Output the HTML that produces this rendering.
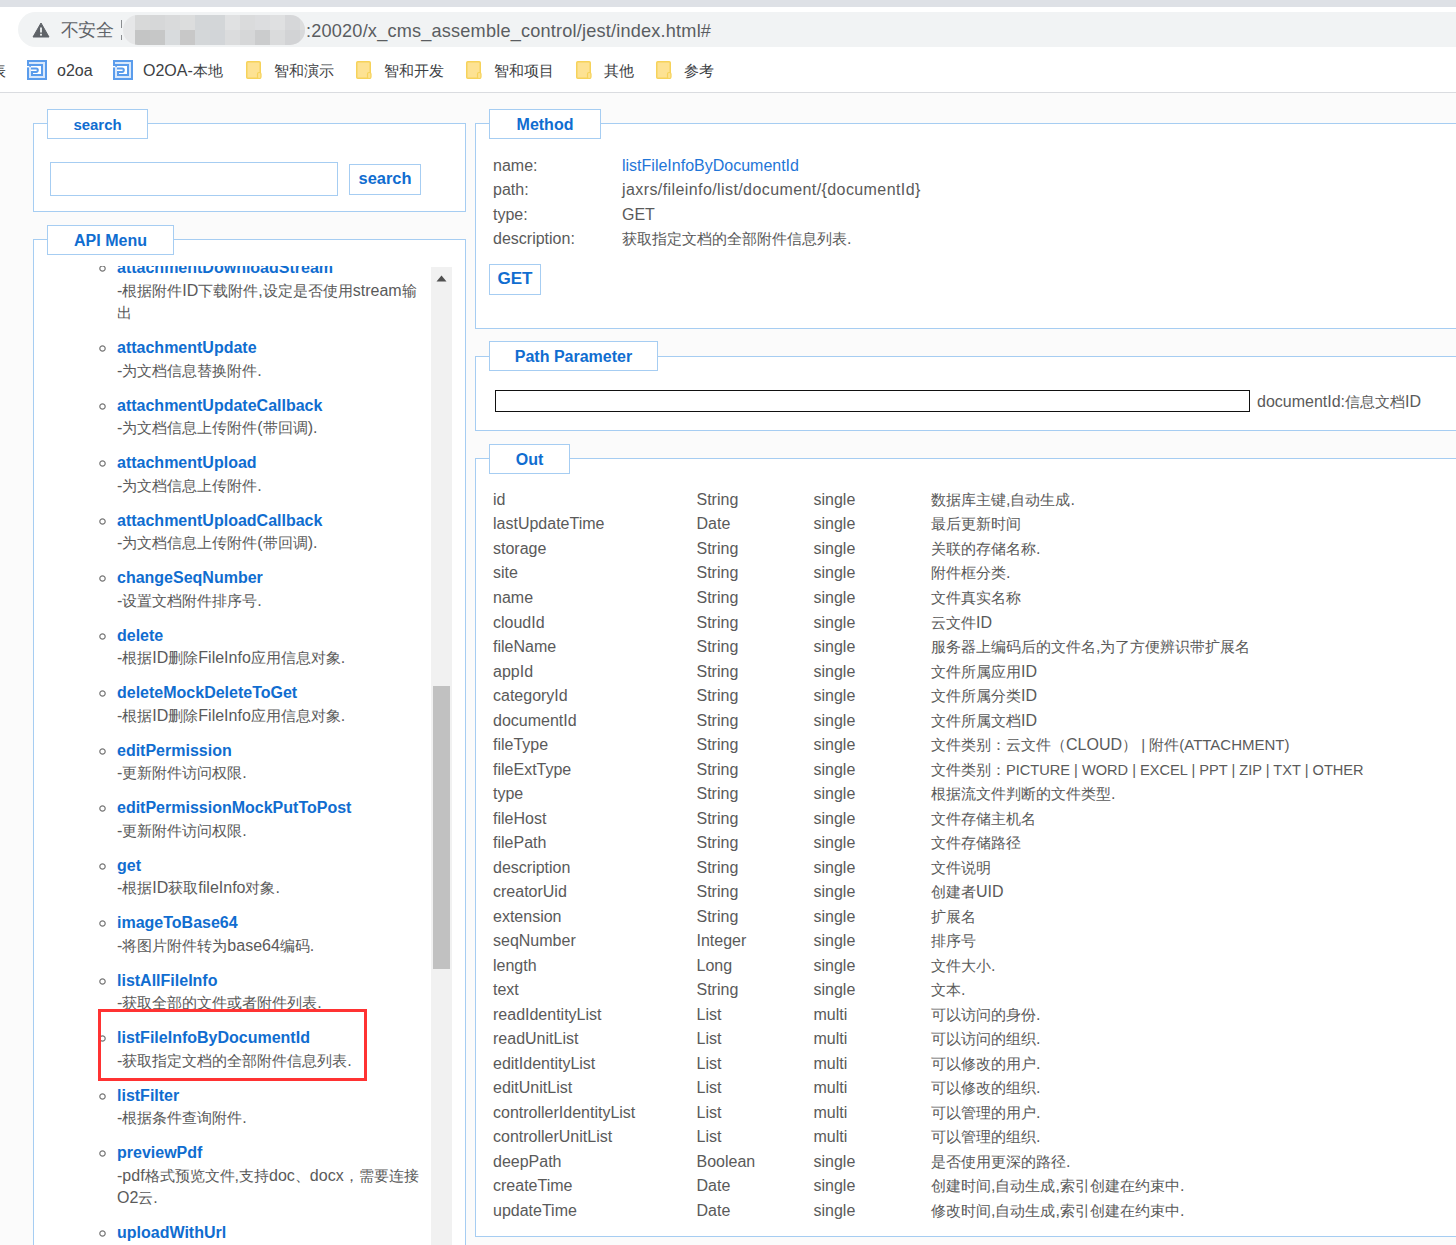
<!DOCTYPE html>
<html><head><meta charset="utf-8"><title>jest</title><style>
html,body{margin:0;padding:0;}
body{width:1456px;height:1245px;overflow:hidden;position:relative;background:#fbfbfb;font-family:"Liberation Sans",sans-serif;font-size:16px;color:#5a5a5a;}
.a{position:absolute;}
.t{position:absolute;white-space:nowrap;line-height:20px;height:20px;}
.fs{position:absolute;background:#fff;border:1px solid #a6cdf2;box-sizing:border-box;}
.lg{position:absolute;background:#fff;border:1px solid #a6cdf2;box-sizing:border-box;color:#106dd0;font-weight:700;text-align:center;white-space:nowrap;}
.b{font-weight:700;color:#106dd0;}
.c{display:inline-block;width:15px;text-align:center;font-style:normal;font-size:15px;}
</style></head>
<body>
<div class="a" style="left:0;top:0;width:1456px;height:93px;background:#fff;"></div>
<div class="a" style="left:0;top:0;width:1456px;height:7px;background:#dee1e6;"></div>
<div class="a" style="left:18px;top:12px;width:1500px;height:35px;border-radius:17.5px;background:#f1f3f4;"></div>
<svg class="a" style="left:32px;top:22px" width="18" height="16" viewBox="0 0 18 16"><path d="M9 1 L17 15 L1 15 Z" fill="#5f6368" stroke="#5f6368" stroke-width="1" stroke-linejoin="round"/><rect x="8.1" y="5.5" width="1.8" height="5" fill="#f1f3f4"/><rect x="8.1" y="11.8" width="1.8" height="1.8" fill="#f1f3f4"/></svg>
<div class="t" style="left:61px;top:18.00px;line-height:24px;height:24px;font-size:19.2px;color:#5f6368;"><i class="c" style="width:17.4px;font-size:18px">不</i><i class="c" style="width:17.4px;font-size:18px">安</i><i class="c" style="width:17.4px;font-size:18px">全</i></div>
<div class="a" style="left:121px;top:20px;width:1.2px;height:8px;background:#8a8d90;"></div>
<div class="a" style="left:121px;top:35px;width:1.2px;height:5px;background:#8a8d90;"></div>
<div class="a" style="left:123px;top:15px;width:182px;height:30px;border-radius:15px;background:#e6e7e8;overflow:hidden;">
<div class="a" style="left:12px;top:0;width:15px;height:15px;background:#d8d9d9;"></div>
<div class="a" style="left:12px;top:15px;width:15px;height:15px;background:#c4c5c5;"></div>
<div class="a" style="left:27px;top:0;width:15px;height:15px;background:#d6d7d8;"></div>
<div class="a" style="left:27px;top:15px;width:15px;height:15px;background:#c6c7c7;"></div>
<div class="a" style="left:42px;top:0;width:15px;height:15px;background:#d9dadb;"></div>
<div class="a" style="left:42px;top:15px;width:15px;height:15px;background:#d8dbdd;"></div>
<div class="a" style="left:57px;top:0;width:15px;height:15px;background:#dcdddd;"></div>
<div class="a" style="left:57px;top:15px;width:15px;height:15px;background:#c8c8c8;"></div>
<div class="a" style="left:72px;top:0;width:15px;height:15px;background:#d3d6d8;"></div>
<div class="a" style="left:72px;top:15px;width:15px;height:15px;background:#d4d7d9;"></div>
<div class="a" style="left:87px;top:0;width:15px;height:15px;background:#d3d6d8;"></div>
<div class="a" style="left:87px;top:15px;width:15px;height:15px;background:#d2d5d8;"></div>
<div class="a" style="left:102px;top:0;width:15px;height:15px;background:#e0e1e2;"></div>
<div class="a" style="left:102px;top:15px;width:15px;height:15px;background:#dbdcdd;"></div>
<div class="a" style="left:117px;top:0;width:15px;height:15px;background:#dadbdc;"></div>
<div class="a" style="left:117px;top:15px;width:15px;height:15px;background:#d6d7d8;"></div>
<div class="a" style="left:132px;top:0;width:15px;height:15px;background:#dcdddf;"></div>
<div class="a" style="left:132px;top:15px;width:15px;height:15px;background:#cbcccd;"></div>
<div class="a" style="left:147px;top:0;width:15px;height:15px;background:#dfe0e1;"></div>
<div class="a" style="left:147px;top:15px;width:15px;height:15px;background:#dadbdc;"></div>
<div class="a" style="left:162px;top:0;width:15px;height:15px;background:#d6d7d9;"></div>
<div class="a" style="left:162px;top:15px;width:15px;height:15px;background:#d2d3d5;"></div>
<div class="a" style="left:177px;top:0;width:15px;height:15px;background:#dcdddd;"></div>
<div class="a" style="left:177px;top:15px;width:15px;height:15px;background:#d8d9da;"></div>
</div>
<div class="t" style="left:306px;top:19.00px;line-height:24px;height:24px;font-size:18.14px;letter-spacing:0.2px;color:#5a5d61;">:20020/x_cms_assemble_control/jest/index.html#</div>
<div class="t" style="left:-9px;top:61.00px;line-height:20px;height:20px;color:#333;"><i class="c" style="width:14.85px;font-size:15px">表</i></div>
<svg class="a" style="left:27px;top:60px" width="20" height="20" viewBox="0 0 20 20"><rect x="0" y="0" width="20" height="20" fill="#5a9cec"/><path d="M3 6.8 V17 H17 V3 H2" fill="none" stroke="#d9e8fb" stroke-width="2"/><rect x="0" y="6" width="2.2" height="1.4" fill="#fff"/><rect x="4" y="6" width="10" height="8" fill="#fff"/><path d="M4 8.5 H9.3 Q10.8 8.5 10.8 10.1 Q10.8 11.9 9.3 11.9 H5 V15" fill="none" stroke="#5a9cec" stroke-width="2"/></svg>
<div class="t" style="left:57px;top:61.00px;line-height:20px;height:20px;color:#3c4043;">o2oa</div>
<svg class="a" style="left:113px;top:60px" width="20" height="20" viewBox="0 0 20 20"><rect x="0" y="0" width="20" height="20" fill="#5a9cec"/><path d="M3 6.8 V17 H17 V3 H2" fill="none" stroke="#d9e8fb" stroke-width="2"/><rect x="0" y="6" width="2.2" height="1.4" fill="#fff"/><rect x="4" y="6" width="10" height="8" fill="#fff"/><path d="M4 8.5 H9.3 Q10.8 8.5 10.8 10.1 Q10.8 11.9 9.3 11.9 H5 V15" fill="none" stroke="#5a9cec" stroke-width="2"/></svg>
<div class="t" style="left:143px;top:61.00px;line-height:20px;height:20px;color:#3c4043;">O2OA-<i class="c" style="width:14.85px;font-size:15px">本</i><i class="c" style="width:14.85px;font-size:15px">地</i></div>
<svg class="a" style="left:246px;top:61px" width="17" height="19" viewBox="0 0 17 19"><rect x="0.75" y="0.75" width="13.5" height="16.5" rx="1" fill="#fde293" stroke="#f6d25a" stroke-width="1.5"/><rect x="11.5" y="11.5" width="3.5" height="6" rx="1.5" fill="#fde293" stroke="#f6d25a" stroke-width="1.2"/></svg>
<div class="t" style="left:274px;top:61.00px;line-height:20px;height:20px;color:#3c4043;"><i class="c" style="width:14.85px;font-size:15px">智</i><i class="c" style="width:14.85px;font-size:15px">和</i><i class="c" style="width:14.85px;font-size:15px">演</i><i class="c" style="width:14.85px;font-size:15px">示</i></div>
<svg class="a" style="left:356px;top:61px" width="17" height="19" viewBox="0 0 17 19"><rect x="0.75" y="0.75" width="13.5" height="16.5" rx="1" fill="#fde293" stroke="#f6d25a" stroke-width="1.5"/><rect x="11.5" y="11.5" width="3.5" height="6" rx="1.5" fill="#fde293" stroke="#f6d25a" stroke-width="1.2"/></svg>
<div class="t" style="left:384px;top:61.00px;line-height:20px;height:20px;color:#3c4043;"><i class="c" style="width:14.85px;font-size:15px">智</i><i class="c" style="width:14.85px;font-size:15px">和</i><i class="c" style="width:14.85px;font-size:15px">开</i><i class="c" style="width:14.85px;font-size:15px">发</i></div>
<svg class="a" style="left:466px;top:61px" width="17" height="19" viewBox="0 0 17 19"><rect x="0.75" y="0.75" width="13.5" height="16.5" rx="1" fill="#fde293" stroke="#f6d25a" stroke-width="1.5"/><rect x="11.5" y="11.5" width="3.5" height="6" rx="1.5" fill="#fde293" stroke="#f6d25a" stroke-width="1.2"/></svg>
<div class="t" style="left:494px;top:61.00px;line-height:20px;height:20px;color:#3c4043;"><i class="c" style="width:14.85px;font-size:15px">智</i><i class="c" style="width:14.85px;font-size:15px">和</i><i class="c" style="width:14.85px;font-size:15px">项</i><i class="c" style="width:14.85px;font-size:15px">目</i></div>
<svg class="a" style="left:576px;top:61px" width="17" height="19" viewBox="0 0 17 19"><rect x="0.75" y="0.75" width="13.5" height="16.5" rx="1" fill="#fde293" stroke="#f6d25a" stroke-width="1.5"/><rect x="11.5" y="11.5" width="3.5" height="6" rx="1.5" fill="#fde293" stroke="#f6d25a" stroke-width="1.2"/></svg>
<div class="t" style="left:604px;top:61.00px;line-height:20px;height:20px;color:#3c4043;"><i class="c" style="width:14.85px;font-size:15px">其</i><i class="c" style="width:14.85px;font-size:15px">他</i></div>
<svg class="a" style="left:656px;top:61px" width="17" height="19" viewBox="0 0 17 19"><rect x="0.75" y="0.75" width="13.5" height="16.5" rx="1" fill="#fde293" stroke="#f6d25a" stroke-width="1.5"/><rect x="11.5" y="11.5" width="3.5" height="6" rx="1.5" fill="#fde293" stroke="#f6d25a" stroke-width="1.2"/></svg>
<div class="t" style="left:684px;top:61.00px;line-height:20px;height:20px;color:#3c4043;"><i class="c" style="width:14.85px;font-size:15px">参</i><i class="c" style="width:14.85px;font-size:15px">考</i></div>
<div class="a" style="left:0;top:92px;width:1456px;height:1px;background:#dadce0;"></div>
<div class="fs" style="left:33px;top:123px;width:433px;height:89px;"></div>
<div class="lg" style="left:47px;top:109px;width:101px;height:30px;"></div>
<div class="t" style="left:47px;top:115.00px;line-height:20px;height:20px;width:101px;text-align:center;font-weight:700;color:#106dd0;font-size:14.94px;">search</div>
<div class="a" style="left:50px;top:162px;width:288px;height:34px;border:1px solid #a6cdf2;box-sizing:border-box;background:#fff;"></div>
<div class="a" style="left:349px;top:164px;width:72px;height:31px;border:1px solid #a6cdf2;box-sizing:border-box;background:#fff;"></div>
<div class="t" style="left:349px;top:168.00px;line-height:20px;height:20px;width:72px;text-align:center;font-weight:700;color:#106dd0;font-size:16.43px;">search</div>
<div class="fs" style="left:33px;top:239px;width:433px;height:1100px;"></div>
<div class="lg" style="left:47px;top:225px;width:127px;height:30px;"></div>
<div class="t" style="left:47px;top:231.00px;line-height:20px;height:20px;width:127px;text-align:center;font-weight:700;color:#106dd0;">API Menu</div>
<div class="a" style="left:34px;top:266px;width:431px;height:1000px;overflow:hidden;">
<svg class="a" style="left:64px;top:-1.70px" width="9" height="9" viewBox="0 0 9 9"><circle cx="4.5" cy="4.5" r="2.7" fill="none" stroke="#777" stroke-width="1.2"/></svg>
<div class="t" style="left:83px;top:-8.00px;line-height:20px;height:20px;font-weight:700;color:#106dd0;">attachmentDownloadStream</div>
<div class="t" style="left:83px;top:15.00px;line-height:20px;height:20px;color:#5a5a5a;">-<i class="c">根</i><i class="c">据</i><i class="c">附</i><i class="c">件</i>ID<i class="c">下</i><i class="c">载</i><i class="c">附</i><i class="c">件</i>,<i class="c">设</i><i class="c">定</i><i class="c">是</i><i class="c">否</i><i class="c">使</i><i class="c">用</i>stream<i class="c">输</i></div>
<div class="t" style="left:83px;top:37.00px;line-height:20px;height:20px;color:#5a5a5a;"><i class="c">出</i></div>
<svg class="a" style="left:64px;top:78.20px" width="9" height="9" viewBox="0 0 9 9"><circle cx="4.5" cy="4.5" r="2.7" fill="none" stroke="#777" stroke-width="1.2"/></svg>
<div class="t" style="left:83px;top:72.00px;line-height:20px;height:20px;font-weight:700;color:#106dd0;">attachmentUpdate</div>
<div class="t" style="left:83px;top:95.00px;line-height:20px;height:20px;color:#5a5a5a;">-<i class="c">为</i><i class="c">文</i><i class="c">档</i><i class="c">信</i><i class="c">息</i><i class="c">替</i><i class="c">换</i><i class="c">附</i><i class="c">件</i>.</div>
<svg class="a" style="left:64px;top:135.70px" width="9" height="9" viewBox="0 0 9 9"><circle cx="4.5" cy="4.5" r="2.7" fill="none" stroke="#777" stroke-width="1.2"/></svg>
<div class="t" style="left:83px;top:130.00px;line-height:20px;height:20px;font-weight:700;color:#106dd0;">attachmentUpdateCallback</div>
<div class="t" style="left:83px;top:152.00px;line-height:20px;height:20px;color:#5a5a5a;">-<i class="c">为</i><i class="c">文</i><i class="c">档</i><i class="c">信</i><i class="c">息</i><i class="c">上</i><i class="c">传</i><i class="c">附</i><i class="c">件</i>(<i class="c">带</i><i class="c">回</i><i class="c">调</i>).</div>
<svg class="a" style="left:64px;top:193.20px" width="9" height="9" viewBox="0 0 9 9"><circle cx="4.5" cy="4.5" r="2.7" fill="none" stroke="#777" stroke-width="1.2"/></svg>
<div class="t" style="left:83px;top:187.00px;line-height:20px;height:20px;font-weight:700;color:#106dd0;">attachmentUpload</div>
<div class="t" style="left:83px;top:210.00px;line-height:20px;height:20px;color:#5a5a5a;">-<i class="c">为</i><i class="c">文</i><i class="c">档</i><i class="c">信</i><i class="c">息</i><i class="c">上</i><i class="c">传</i><i class="c">附</i><i class="c">件</i>.</div>
<svg class="a" style="left:64px;top:250.70px" width="9" height="9" viewBox="0 0 9 9"><circle cx="4.5" cy="4.5" r="2.7" fill="none" stroke="#777" stroke-width="1.2"/></svg>
<div class="t" style="left:83px;top:245.00px;line-height:20px;height:20px;font-weight:700;color:#106dd0;">attachmentUploadCallback</div>
<div class="t" style="left:83px;top:267.00px;line-height:20px;height:20px;color:#5a5a5a;">-<i class="c">为</i><i class="c">文</i><i class="c">档</i><i class="c">信</i><i class="c">息</i><i class="c">上</i><i class="c">传</i><i class="c">附</i><i class="c">件</i>(<i class="c">带</i><i class="c">回</i><i class="c">调</i>).</div>
<svg class="a" style="left:64px;top:308.20px" width="9" height="9" viewBox="0 0 9 9"><circle cx="4.5" cy="4.5" r="2.7" fill="none" stroke="#777" stroke-width="1.2"/></svg>
<div class="t" style="left:83px;top:302.00px;line-height:20px;height:20px;font-weight:700;color:#106dd0;">changeSeqNumber</div>
<div class="t" style="left:83px;top:325.00px;line-height:20px;height:20px;color:#5a5a5a;">-<i class="c">设</i><i class="c">置</i><i class="c">文</i><i class="c">档</i><i class="c">附</i><i class="c">件</i><i class="c">排</i><i class="c">序</i><i class="c">号</i>.</div>
<svg class="a" style="left:64px;top:365.70px" width="9" height="9" viewBox="0 0 9 9"><circle cx="4.5" cy="4.5" r="2.7" fill="none" stroke="#777" stroke-width="1.2"/></svg>
<div class="t" style="left:83px;top:360.00px;line-height:20px;height:20px;font-weight:700;color:#106dd0;">delete</div>
<div class="t" style="left:83px;top:382.00px;line-height:20px;height:20px;color:#5a5a5a;">-<i class="c">根</i><i class="c">据</i>ID<i class="c">删</i><i class="c">除</i>FileInfo<i class="c">应</i><i class="c">用</i><i class="c">信</i><i class="c">息</i><i class="c">对</i><i class="c">象</i>.</div>
<svg class="a" style="left:64px;top:423.20px" width="9" height="9" viewBox="0 0 9 9"><circle cx="4.5" cy="4.5" r="2.7" fill="none" stroke="#777" stroke-width="1.2"/></svg>
<div class="t" style="left:83px;top:417.00px;line-height:20px;height:20px;font-weight:700;color:#106dd0;">deleteMockDeleteToGet</div>
<div class="t" style="left:83px;top:440.00px;line-height:20px;height:20px;color:#5a5a5a;">-<i class="c">根</i><i class="c">据</i>ID<i class="c">删</i><i class="c">除</i>FileInfo<i class="c">应</i><i class="c">用</i><i class="c">信</i><i class="c">息</i><i class="c">对</i><i class="c">象</i>.</div>
<svg class="a" style="left:64px;top:480.70px" width="9" height="9" viewBox="0 0 9 9"><circle cx="4.5" cy="4.5" r="2.7" fill="none" stroke="#777" stroke-width="1.2"/></svg>
<div class="t" style="left:83px;top:475.00px;line-height:20px;height:20px;font-weight:700;color:#106dd0;">editPermission</div>
<div class="t" style="left:83px;top:497.00px;line-height:20px;height:20px;color:#5a5a5a;">-<i class="c">更</i><i class="c">新</i><i class="c">附</i><i class="c">件</i><i class="c">访</i><i class="c">问</i><i class="c">权</i><i class="c">限</i>.</div>
<svg class="a" style="left:64px;top:538.20px" width="9" height="9" viewBox="0 0 9 9"><circle cx="4.5" cy="4.5" r="2.7" fill="none" stroke="#777" stroke-width="1.2"/></svg>
<div class="t" style="left:83px;top:532.00px;line-height:20px;height:20px;font-weight:700;color:#106dd0;">editPermissionMockPutToPost</div>
<div class="t" style="left:83px;top:555.00px;line-height:20px;height:20px;color:#5a5a5a;">-<i class="c">更</i><i class="c">新</i><i class="c">附</i><i class="c">件</i><i class="c">访</i><i class="c">问</i><i class="c">权</i><i class="c">限</i>.</div>
<svg class="a" style="left:64px;top:595.70px" width="9" height="9" viewBox="0 0 9 9"><circle cx="4.5" cy="4.5" r="2.7" fill="none" stroke="#777" stroke-width="1.2"/></svg>
<div class="t" style="left:83px;top:590.00px;line-height:20px;height:20px;font-weight:700;color:#106dd0;">get</div>
<div class="t" style="left:83px;top:612.00px;line-height:20px;height:20px;color:#5a5a5a;">-<i class="c">根</i><i class="c">据</i>ID<i class="c">获</i><i class="c">取</i>fileInfo<i class="c">对</i><i class="c">象</i>.</div>
<svg class="a" style="left:64px;top:653.20px" width="9" height="9" viewBox="0 0 9 9"><circle cx="4.5" cy="4.5" r="2.7" fill="none" stroke="#777" stroke-width="1.2"/></svg>
<div class="t" style="left:83px;top:647.00px;line-height:20px;height:20px;font-weight:700;color:#106dd0;">imageToBase64</div>
<div class="t" style="left:83px;top:670.00px;line-height:20px;height:20px;color:#5a5a5a;">-<i class="c">将</i><i class="c">图</i><i class="c">片</i><i class="c">附</i><i class="c">件</i><i class="c">转</i><i class="c">为</i>base64<i class="c">编</i><i class="c">码</i>.</div>
<svg class="a" style="left:64px;top:710.70px" width="9" height="9" viewBox="0 0 9 9"><circle cx="4.5" cy="4.5" r="2.7" fill="none" stroke="#777" stroke-width="1.2"/></svg>
<div class="t" style="left:83px;top:705.00px;line-height:20px;height:20px;font-weight:700;color:#106dd0;">listAllFileInfo</div>
<div class="t" style="left:83px;top:727.00px;line-height:20px;height:20px;color:#5a5a5a;">-<i class="c">获</i><i class="c">取</i><i class="c">全</i><i class="c">部</i><i class="c">的</i><i class="c">文</i><i class="c">件</i><i class="c">或</i><i class="c">者</i><i class="c">附</i><i class="c">件</i><i class="c">列</i><i class="c">表</i>.</div>
<svg class="a" style="left:64px;top:768.20px" width="9" height="9" viewBox="0 0 9 9"><circle cx="4.5" cy="4.5" r="2.7" fill="none" stroke="#777" stroke-width="1.2"/></svg>
<div class="t" style="left:83px;top:762.00px;line-height:20px;height:20px;font-weight:700;color:#106dd0;">listFileInfoByDocumentId</div>
<div class="t" style="left:83px;top:785.00px;line-height:20px;height:20px;color:#5a5a5a;">-<i class="c">获</i><i class="c">取</i><i class="c">指</i><i class="c">定</i><i class="c">文</i><i class="c">档</i><i class="c">的</i><i class="c">全</i><i class="c">部</i><i class="c">附</i><i class="c">件</i><i class="c">信</i><i class="c">息</i><i class="c">列</i><i class="c">表</i>.</div>
<svg class="a" style="left:64px;top:825.70px" width="9" height="9" viewBox="0 0 9 9"><circle cx="4.5" cy="4.5" r="2.7" fill="none" stroke="#777" stroke-width="1.2"/></svg>
<div class="t" style="left:83px;top:820.00px;line-height:20px;height:20px;font-weight:700;color:#106dd0;">listFilter</div>
<div class="t" style="left:83px;top:842.00px;line-height:20px;height:20px;color:#5a5a5a;">-<i class="c">根</i><i class="c">据</i><i class="c">条</i><i class="c">件</i><i class="c">查</i><i class="c">询</i><i class="c">附</i><i class="c">件</i>.</div>
<svg class="a" style="left:64px;top:883.20px" width="9" height="9" viewBox="0 0 9 9"><circle cx="4.5" cy="4.5" r="2.7" fill="none" stroke="#777" stroke-width="1.2"/></svg>
<div class="t" style="left:83px;top:877.00px;line-height:20px;height:20px;font-weight:700;color:#106dd0;">previewPdf</div>
<div class="t" style="left:83px;top:900.00px;line-height:20px;height:20px;color:#5a5a5a;">-pdf<i class="c">格</i><i class="c">式</i><i class="c">预</i><i class="c">览</i><i class="c">文</i><i class="c">件</i>,<i class="c">支</i><i class="c">持</i>doc<i class="c">、</i>docx<i class="c">，</i><i class="c">需</i><i class="c">要</i><i class="c">连</i><i class="c">接</i></div>
<div class="t" style="left:83px;top:922.00px;line-height:20px;height:20px;color:#5a5a5a;">O2<i class="c">云</i>.</div>
<svg class="a" style="left:64px;top:963.10px" width="9" height="9" viewBox="0 0 9 9"><circle cx="4.5" cy="4.5" r="2.7" fill="none" stroke="#777" stroke-width="1.2"/></svg>
<div class="t" style="left:83px;top:957.00px;line-height:20px;height:20px;font-weight:700;color:#106dd0;">uploadWithUrl</div>
<div class="t" style="left:83px;top:980.00px;line-height:20px;height:20px;color:#5a5a5a;">-<i class="c">通</i><i class="c">过</i>URL<i class="c">上</i><i class="c">传</i><i class="c">附</i><i class="c">件</i>.</div>
</div>
<div class="a" style="left:431px;top:267px;width:21px;height:1000px;background:#f1f1f1;"></div>
<svg class="a" style="left:436px;top:275px" width="11" height="7" viewBox="0 0 11 7"><path d="M5.5 0.5 L10.5 6.5 L0.5 6.5 Z" fill="#505050"/></svg>
<div class="a" style="left:433px;top:686px;width:17px;height:283px;background:#c1c1c1;"></div>
<div class="a" style="left:98px;top:1009px;width:269px;height:72px;border:3px solid #ff3232;box-sizing:border-box;"></div>
<div class="fs" style="left:475px;top:123px;width:1100px;height:206px;"></div>
<div class="lg" style="left:489px;top:109px;width:112px;height:30px;"></div>
<div class="t" style="left:489px;top:115.00px;line-height:20px;height:20px;width:112px;text-align:center;font-weight:700;color:#106dd0;">Method</div>
<div class="t" style="left:493px;top:156.00px;line-height:20px;height:20px;">name:</div>
<div class="t" style="left:622px;top:156.00px;line-height:20px;height:20px;"><span style="color:#1f76d8">listFileInfoByDocumentId</span></div>
<div class="t" style="left:493px;top:180.00px;line-height:20px;height:20px;">path:</div>
<div class="t" style="left:622px;top:180.00px;line-height:20px;height:20px;"><span style="letter-spacing:0.41px">jaxrs/fileinfo/list/document/{documentId}</span></div>
<div class="t" style="left:493px;top:205.00px;line-height:20px;height:20px;">type:</div>
<div class="t" style="left:622px;top:205.00px;line-height:20px;height:20px;">GET</div>
<div class="t" style="left:493px;top:229.00px;line-height:20px;height:20px;">description:</div>
<div class="t" style="left:622px;top:229.00px;line-height:20px;height:20px;"><i class="c">获</i><i class="c">取</i><i class="c">指</i><i class="c">定</i><i class="c">文</i><i class="c">档</i><i class="c">的</i><i class="c">全</i><i class="c">部</i><i class="c">附</i><i class="c">件</i><i class="c">信</i><i class="c">息</i><i class="c">列</i><i class="c">表</i>.</div>
<div class="a" style="left:489px;top:264px;width:52px;height:31px;border:1px solid #a6cdf2;box-sizing:border-box;background:#fff;"></div>
<div class="t" style="left:489px;top:269.00px;line-height:20px;height:20px;width:52px;text-align:center;font-weight:700;color:#106dd0;font-size:17.07px;">GET</div>
<div class="fs" style="left:475px;top:356px;width:1100px;height:75px;"></div>
<div class="lg" style="left:489px;top:341px;width:169px;height:30px;"></div>
<div class="t" style="left:489px;top:347.00px;line-height:20px;height:20px;width:169px;text-align:center;font-weight:700;color:#106dd0;">Path Parameter</div>
<div class="a" style="left:495px;top:390px;width:755px;height:22px;border:1.5px solid #111;box-sizing:border-box;background:#fff;"></div>
<div class="t" style="left:1257px;top:392.00px;line-height:20px;height:20px;">documentId:<i class="c">信</i><i class="c">息</i><i class="c">文</i><i class="c">档</i>ID</div>
<div class="fs" style="left:475px;top:458px;width:1100px;height:779px;"></div>
<div class="lg" style="left:489px;top:444px;width:81px;height:30px;"></div>
<div class="t" style="left:489px;top:450.00px;line-height:20px;height:20px;width:81px;text-align:center;font-weight:700;color:#106dd0;">Out</div>
<div class="t" style="left:493px;top:490.00px;line-height:20px;height:20px;">id</div>
<div class="t" style="left:696.5px;top:490.00px;line-height:20px;height:20px;">String</div>
<div class="t" style="left:813.5px;top:490.00px;line-height:20px;height:20px;">single</div>
<div class="t" style="left:931px;top:490.00px;line-height:20px;height:20px;"><i class="c">数</i><i class="c">据</i><i class="c">库</i><i class="c">主</i><i class="c">键</i>,<i class="c">自</i><i class="c">动</i><i class="c">生</i><i class="c">成</i>.</div>
<div class="t" style="left:493px;top:514.00px;line-height:20px;height:20px;">lastUpdateTime</div>
<div class="t" style="left:696.5px;top:514.00px;line-height:20px;height:20px;">Date</div>
<div class="t" style="left:813.5px;top:514.00px;line-height:20px;height:20px;">single</div>
<div class="t" style="left:931px;top:514.00px;line-height:20px;height:20px;"><i class="c">最</i><i class="c">后</i><i class="c">更</i><i class="c">新</i><i class="c">时</i><i class="c">间</i></div>
<div class="t" style="left:493px;top:539.00px;line-height:20px;height:20px;">storage</div>
<div class="t" style="left:696.5px;top:539.00px;line-height:20px;height:20px;">String</div>
<div class="t" style="left:813.5px;top:539.00px;line-height:20px;height:20px;">single</div>
<div class="t" style="left:931px;top:539.00px;line-height:20px;height:20px;"><i class="c">关</i><i class="c">联</i><i class="c">的</i><i class="c">存</i><i class="c">储</i><i class="c">名</i><i class="c">称</i>.</div>
<div class="t" style="left:493px;top:563.00px;line-height:20px;height:20px;">site</div>
<div class="t" style="left:696.5px;top:563.00px;line-height:20px;height:20px;">String</div>
<div class="t" style="left:813.5px;top:563.00px;line-height:20px;height:20px;">single</div>
<div class="t" style="left:931px;top:563.00px;line-height:20px;height:20px;"><i class="c">附</i><i class="c">件</i><i class="c">框</i><i class="c">分</i><i class="c">类</i>.</div>
<div class="t" style="left:493px;top:588.00px;line-height:20px;height:20px;">name</div>
<div class="t" style="left:696.5px;top:588.00px;line-height:20px;height:20px;">String</div>
<div class="t" style="left:813.5px;top:588.00px;line-height:20px;height:20px;">single</div>
<div class="t" style="left:931px;top:588.00px;line-height:20px;height:20px;"><i class="c">文</i><i class="c">件</i><i class="c">真</i><i class="c">实</i><i class="c">名</i><i class="c">称</i></div>
<div class="t" style="left:493px;top:613.00px;line-height:20px;height:20px;">cloudId</div>
<div class="t" style="left:696.5px;top:613.00px;line-height:20px;height:20px;">String</div>
<div class="t" style="left:813.5px;top:613.00px;line-height:20px;height:20px;">single</div>
<div class="t" style="left:931px;top:613.00px;line-height:20px;height:20px;"><i class="c">云</i><i class="c">文</i><i class="c">件</i>ID</div>
<div class="t" style="left:493px;top:637.00px;line-height:20px;height:20px;">fileName</div>
<div class="t" style="left:696.5px;top:637.00px;line-height:20px;height:20px;">String</div>
<div class="t" style="left:813.5px;top:637.00px;line-height:20px;height:20px;">single</div>
<div class="t" style="left:931px;top:637.00px;line-height:20px;height:20px;"><i class="c">服</i><i class="c">务</i><i class="c">器</i><i class="c">上</i><i class="c">编</i><i class="c">码</i><i class="c">后</i><i class="c">的</i><i class="c">文</i><i class="c">件</i><i class="c">名</i>,<i class="c">为</i><i class="c">了</i><i class="c">方</i><i class="c">便</i><i class="c">辨</i><i class="c">识</i><i class="c">带</i><i class="c">扩</i><i class="c">展</i><i class="c">名</i></div>
<div class="t" style="left:493px;top:662.00px;line-height:20px;height:20px;">appId</div>
<div class="t" style="left:696.5px;top:662.00px;line-height:20px;height:20px;">String</div>
<div class="t" style="left:813.5px;top:662.00px;line-height:20px;height:20px;">single</div>
<div class="t" style="left:931px;top:662.00px;line-height:20px;height:20px;"><i class="c">文</i><i class="c">件</i><i class="c">所</i><i class="c">属</i><i class="c">应</i><i class="c">用</i>ID</div>
<div class="t" style="left:493px;top:686.00px;line-height:20px;height:20px;">categoryId</div>
<div class="t" style="left:696.5px;top:686.00px;line-height:20px;height:20px;">String</div>
<div class="t" style="left:813.5px;top:686.00px;line-height:20px;height:20px;">single</div>
<div class="t" style="left:931px;top:686.00px;line-height:20px;height:20px;"><i class="c">文</i><i class="c">件</i><i class="c">所</i><i class="c">属</i><i class="c">分</i><i class="c">类</i>ID</div>
<div class="t" style="left:493px;top:711.00px;line-height:20px;height:20px;">documentId</div>
<div class="t" style="left:696.5px;top:711.00px;line-height:20px;height:20px;">String</div>
<div class="t" style="left:813.5px;top:711.00px;line-height:20px;height:20px;">single</div>
<div class="t" style="left:931px;top:711.00px;line-height:20px;height:20px;"><i class="c">文</i><i class="c">件</i><i class="c">所</i><i class="c">属</i><i class="c">文</i><i class="c">档</i>ID</div>
<div class="t" style="left:493px;top:735.00px;line-height:20px;height:20px;">fileType</div>
<div class="t" style="left:696.5px;top:735.00px;line-height:20px;height:20px;">String</div>
<div class="t" style="left:813.5px;top:735.00px;line-height:20px;height:20px;">single</div>
<div class="t" style="left:931px;top:735.00px;line-height:20px;height:20px;"><i class="c">文</i><i class="c">件</i><i class="c">类</i><i class="c">别</i><i class="c">：</i><i class="c">云</i><i class="c">文</i><i class="c">件</i><i class="c">（</i>CLOUD<i class="c">）</i><span style="font-size:15px"> | </span><i class="c">附</i><i class="c">件</i><span style="font-size:15px">(ATTACHMENT)</span></div>
<div class="t" style="left:493px;top:760.00px;line-height:20px;height:20px;">fileExtType</div>
<div class="t" style="left:696.5px;top:760.00px;line-height:20px;height:20px;">String</div>
<div class="t" style="left:813.5px;top:760.00px;line-height:20px;height:20px;">single</div>
<div class="t" style="left:931px;top:760.00px;line-height:20px;height:20px;"><i class="c">文</i><i class="c">件</i><i class="c">类</i><i class="c">别</i><i class="c">：</i><span style="font-size:14.6px">PICTURE | WORD | EXCEL | PPT | ZIP | TXT | OTHER</span></div>
<div class="t" style="left:493px;top:784.00px;line-height:20px;height:20px;">type</div>
<div class="t" style="left:696.5px;top:784.00px;line-height:20px;height:20px;">String</div>
<div class="t" style="left:813.5px;top:784.00px;line-height:20px;height:20px;">single</div>
<div class="t" style="left:931px;top:784.00px;line-height:20px;height:20px;"><i class="c">根</i><i class="c">据</i><i class="c">流</i><i class="c">文</i><i class="c">件</i><i class="c">判</i><i class="c">断</i><i class="c">的</i><i class="c">文</i><i class="c">件</i><i class="c">类</i><i class="c">型</i>.</div>
<div class="t" style="left:493px;top:809.00px;line-height:20px;height:20px;">fileHost</div>
<div class="t" style="left:696.5px;top:809.00px;line-height:20px;height:20px;">String</div>
<div class="t" style="left:813.5px;top:809.00px;line-height:20px;height:20px;">single</div>
<div class="t" style="left:931px;top:809.00px;line-height:20px;height:20px;"><i class="c">文</i><i class="c">件</i><i class="c">存</i><i class="c">储</i><i class="c">主</i><i class="c">机</i><i class="c">名</i></div>
<div class="t" style="left:493px;top:833.00px;line-height:20px;height:20px;">filePath</div>
<div class="t" style="left:696.5px;top:833.00px;line-height:20px;height:20px;">String</div>
<div class="t" style="left:813.5px;top:833.00px;line-height:20px;height:20px;">single</div>
<div class="t" style="left:931px;top:833.00px;line-height:20px;height:20px;"><i class="c">文</i><i class="c">件</i><i class="c">存</i><i class="c">储</i><i class="c">路</i><i class="c">径</i></div>
<div class="t" style="left:493px;top:858.00px;line-height:20px;height:20px;">description</div>
<div class="t" style="left:696.5px;top:858.00px;line-height:20px;height:20px;">String</div>
<div class="t" style="left:813.5px;top:858.00px;line-height:20px;height:20px;">single</div>
<div class="t" style="left:931px;top:858.00px;line-height:20px;height:20px;"><i class="c">文</i><i class="c">件</i><i class="c">说</i><i class="c">明</i></div>
<div class="t" style="left:493px;top:882.00px;line-height:20px;height:20px;">creatorUid</div>
<div class="t" style="left:696.5px;top:882.00px;line-height:20px;height:20px;">String</div>
<div class="t" style="left:813.5px;top:882.00px;line-height:20px;height:20px;">single</div>
<div class="t" style="left:931px;top:882.00px;line-height:20px;height:20px;"><i class="c">创</i><i class="c">建</i><i class="c">者</i>UID</div>
<div class="t" style="left:493px;top:907.00px;line-height:20px;height:20px;">extension</div>
<div class="t" style="left:696.5px;top:907.00px;line-height:20px;height:20px;">String</div>
<div class="t" style="left:813.5px;top:907.00px;line-height:20px;height:20px;">single</div>
<div class="t" style="left:931px;top:907.00px;line-height:20px;height:20px;"><i class="c">扩</i><i class="c">展</i><i class="c">名</i></div>
<div class="t" style="left:493px;top:931.00px;line-height:20px;height:20px;">seqNumber</div>
<div class="t" style="left:696.5px;top:931.00px;line-height:20px;height:20px;">Integer</div>
<div class="t" style="left:813.5px;top:931.00px;line-height:20px;height:20px;">single</div>
<div class="t" style="left:931px;top:931.00px;line-height:20px;height:20px;"><i class="c">排</i><i class="c">序</i><i class="c">号</i></div>
<div class="t" style="left:493px;top:956.00px;line-height:20px;height:20px;">length</div>
<div class="t" style="left:696.5px;top:956.00px;line-height:20px;height:20px;">Long</div>
<div class="t" style="left:813.5px;top:956.00px;line-height:20px;height:20px;">single</div>
<div class="t" style="left:931px;top:956.00px;line-height:20px;height:20px;"><i class="c">文</i><i class="c">件</i><i class="c">大</i><i class="c">小</i>.</div>
<div class="t" style="left:493px;top:980.00px;line-height:20px;height:20px;">text</div>
<div class="t" style="left:696.5px;top:980.00px;line-height:20px;height:20px;">String</div>
<div class="t" style="left:813.5px;top:980.00px;line-height:20px;height:20px;">single</div>
<div class="t" style="left:931px;top:980.00px;line-height:20px;height:20px;"><i class="c">文</i><i class="c">本</i>.</div>
<div class="t" style="left:493px;top:1005.00px;line-height:20px;height:20px;">readIdentityList</div>
<div class="t" style="left:696.5px;top:1005.00px;line-height:20px;height:20px;">List</div>
<div class="t" style="left:813.5px;top:1005.00px;line-height:20px;height:20px;">multi</div>
<div class="t" style="left:931px;top:1005.00px;line-height:20px;height:20px;"><i class="c">可</i><i class="c">以</i><i class="c">访</i><i class="c">问</i><i class="c">的</i><i class="c">身</i><i class="c">份</i>.</div>
<div class="t" style="left:493px;top:1029.00px;line-height:20px;height:20px;">readUnitList</div>
<div class="t" style="left:696.5px;top:1029.00px;line-height:20px;height:20px;">List</div>
<div class="t" style="left:813.5px;top:1029.00px;line-height:20px;height:20px;">multi</div>
<div class="t" style="left:931px;top:1029.00px;line-height:20px;height:20px;"><i class="c">可</i><i class="c">以</i><i class="c">访</i><i class="c">问</i><i class="c">的</i><i class="c">组</i><i class="c">织</i>.</div>
<div class="t" style="left:493px;top:1054.00px;line-height:20px;height:20px;">editIdentityList</div>
<div class="t" style="left:696.5px;top:1054.00px;line-height:20px;height:20px;">List</div>
<div class="t" style="left:813.5px;top:1054.00px;line-height:20px;height:20px;">multi</div>
<div class="t" style="left:931px;top:1054.00px;line-height:20px;height:20px;"><i class="c">可</i><i class="c">以</i><i class="c">修</i><i class="c">改</i><i class="c">的</i><i class="c">用</i><i class="c">户</i>.</div>
<div class="t" style="left:493px;top:1078.00px;line-height:20px;height:20px;">editUnitList</div>
<div class="t" style="left:696.5px;top:1078.00px;line-height:20px;height:20px;">List</div>
<div class="t" style="left:813.5px;top:1078.00px;line-height:20px;height:20px;">multi</div>
<div class="t" style="left:931px;top:1078.00px;line-height:20px;height:20px;"><i class="c">可</i><i class="c">以</i><i class="c">修</i><i class="c">改</i><i class="c">的</i><i class="c">组</i><i class="c">织</i>.</div>
<div class="t" style="left:493px;top:1103.00px;line-height:20px;height:20px;">controllerIdentityList</div>
<div class="t" style="left:696.5px;top:1103.00px;line-height:20px;height:20px;">List</div>
<div class="t" style="left:813.5px;top:1103.00px;line-height:20px;height:20px;">multi</div>
<div class="t" style="left:931px;top:1103.00px;line-height:20px;height:20px;"><i class="c">可</i><i class="c">以</i><i class="c">管</i><i class="c">理</i><i class="c">的</i><i class="c">用</i><i class="c">户</i>.</div>
<div class="t" style="left:493px;top:1127.00px;line-height:20px;height:20px;">controllerUnitList</div>
<div class="t" style="left:696.5px;top:1127.00px;line-height:20px;height:20px;">List</div>
<div class="t" style="left:813.5px;top:1127.00px;line-height:20px;height:20px;">multi</div>
<div class="t" style="left:931px;top:1127.00px;line-height:20px;height:20px;"><i class="c">可</i><i class="c">以</i><i class="c">管</i><i class="c">理</i><i class="c">的</i><i class="c">组</i><i class="c">织</i>.</div>
<div class="t" style="left:493px;top:1152.00px;line-height:20px;height:20px;">deepPath</div>
<div class="t" style="left:696.5px;top:1152.00px;line-height:20px;height:20px;">Boolean</div>
<div class="t" style="left:813.5px;top:1152.00px;line-height:20px;height:20px;">single</div>
<div class="t" style="left:931px;top:1152.00px;line-height:20px;height:20px;"><i class="c">是</i><i class="c">否</i><i class="c">使</i><i class="c">用</i><i class="c">更</i><i class="c">深</i><i class="c">的</i><i class="c">路</i><i class="c">径</i>.</div>
<div class="t" style="left:493px;top:1176.00px;line-height:20px;height:20px;">createTime</div>
<div class="t" style="left:696.5px;top:1176.00px;line-height:20px;height:20px;">Date</div>
<div class="t" style="left:813.5px;top:1176.00px;line-height:20px;height:20px;">single</div>
<div class="t" style="left:931px;top:1176.00px;line-height:20px;height:20px;"><i class="c">创</i><i class="c">建</i><i class="c">时</i><i class="c">间</i>,<i class="c">自</i><i class="c">动</i><i class="c">生</i><i class="c">成</i>,<i class="c">索</i><i class="c">引</i><i class="c">创</i><i class="c">建</i><i class="c">在</i><i class="c">约</i><i class="c">束</i><i class="c">中</i>.</div>
<div class="t" style="left:493px;top:1201.00px;line-height:20px;height:20px;">updateTime</div>
<div class="t" style="left:696.5px;top:1201.00px;line-height:20px;height:20px;">Date</div>
<div class="t" style="left:813.5px;top:1201.00px;line-height:20px;height:20px;">single</div>
<div class="t" style="left:931px;top:1201.00px;line-height:20px;height:20px;"><i class="c">修</i><i class="c">改</i><i class="c">时</i><i class="c">间</i>,<i class="c">自</i><i class="c">动</i><i class="c">生</i><i class="c">成</i>,<i class="c">索</i><i class="c">引</i><i class="c">创</i><i class="c">建</i><i class="c">在</i><i class="c">约</i><i class="c">束</i><i class="c">中</i>.</div>
</body></html>
